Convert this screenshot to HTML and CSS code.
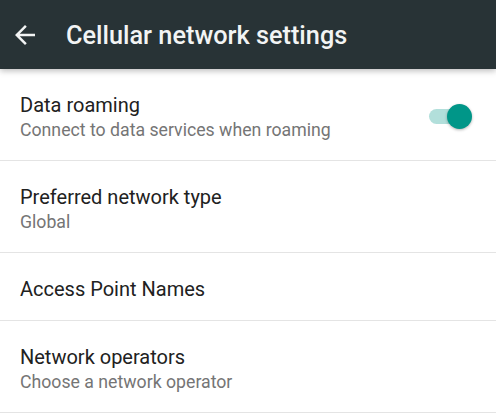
FILE: index.html
```html
<!DOCTYPE html>
<html>
<head>
<meta charset="utf-8">
<link rel="stylesheet" href="styles.css">
</head>
<body>
<header class="toolbar">
  <svg class="back" viewBox="0 0 24 24" width="30" height="30"><path fill="#f2f4f4" d="M20 11H7.83l5.59-5.59L12 4l-8 8 8 8 1.41-1.41L7.83 13H20v-2z"/></svg>
  <h1 class="title">Cellular network settings</h1>
</header>
<main class="list">
  <div class="item">
    <div class="texts">
      <div class="primary">Data roaming</div>
      <div class="secondary">Connect to data services when roaming</div>
    </div>
    <div class="switch"><div class="track"></div><div class="thumb"></div></div>
  </div>
  <div class="item">
    <div class="texts">
      <div class="primary">Preferred network type</div>
      <div class="secondary">Global</div>
    </div>
  </div>
  <div class="item short">
    <div class="texts">
      <div class="primary">Access Point Names</div>
    </div>
  </div>
  <div class="item">
    <div class="texts">
      <div class="primary">Network operators</div>
      <div class="secondary">Choose a network operator</div>
    </div>
  </div>
</main>
</body>
</html>
```
FILE: styles.css
```css
html, body {
  margin: 0;
  padding: 0;
  background: #ffffff;
  font-family: Roboto, "Noto Sans", sans-serif;
}
body {
  width: 496px;
  height: 420px;
  overflow: hidden;
}
.toolbar {
  position: relative;
  z-index: 2;
  height: 69px;
  background: #283336;
  display: flex;
  align-items: center;
  box-shadow: 0 2px 6px rgba(0,0,0,0.26);
}
.back {
  margin-left: 10px;
  flex: none;
}
.title {
  margin: 2px 0 0 26px;
  font-size: 25.3px;
  font-weight: 500;
  color: #f2f4f4;
  letter-spacing: 0;
}
.list {
  display: flex;
  flex-direction: column;
}
.item {
  height: 91px;
  border-bottom: 1px solid #e4e4e4;
  padding: 0 20px;
  display: flex;
  align-items: center;
  justify-content: space-between;
}
.item.short {
  height: 67px;
}
.texts {
  display: flex;
  flex-direction: column;
  padding-top: 5px;
}
.primary {
  font-size: 20px;
  color: #212121;
  line-height: 25px;
}
.secondary {
  font-size: 17.7px;
  color: #757575;
  line-height: 24px;
}
.switch {
  position: relative;
  width: 46px;
  height: 26px;
  margin: 4px 3px 0 0;
}
.track {
  position: absolute;
  left: 2px;
  top: 5px;
  width: 38px;
  height: 15px;
  border-radius: 8px;
  background: #b2dfdb;
}
.thumb {
  position: absolute;
  left: 20px;
  top: 0;
  width: 25px;
  height: 25px;
  border-radius: 50%;
  background: #009688;
  box-shadow: 0 1px 3px rgba(0,0,0,0.3);
}
```
